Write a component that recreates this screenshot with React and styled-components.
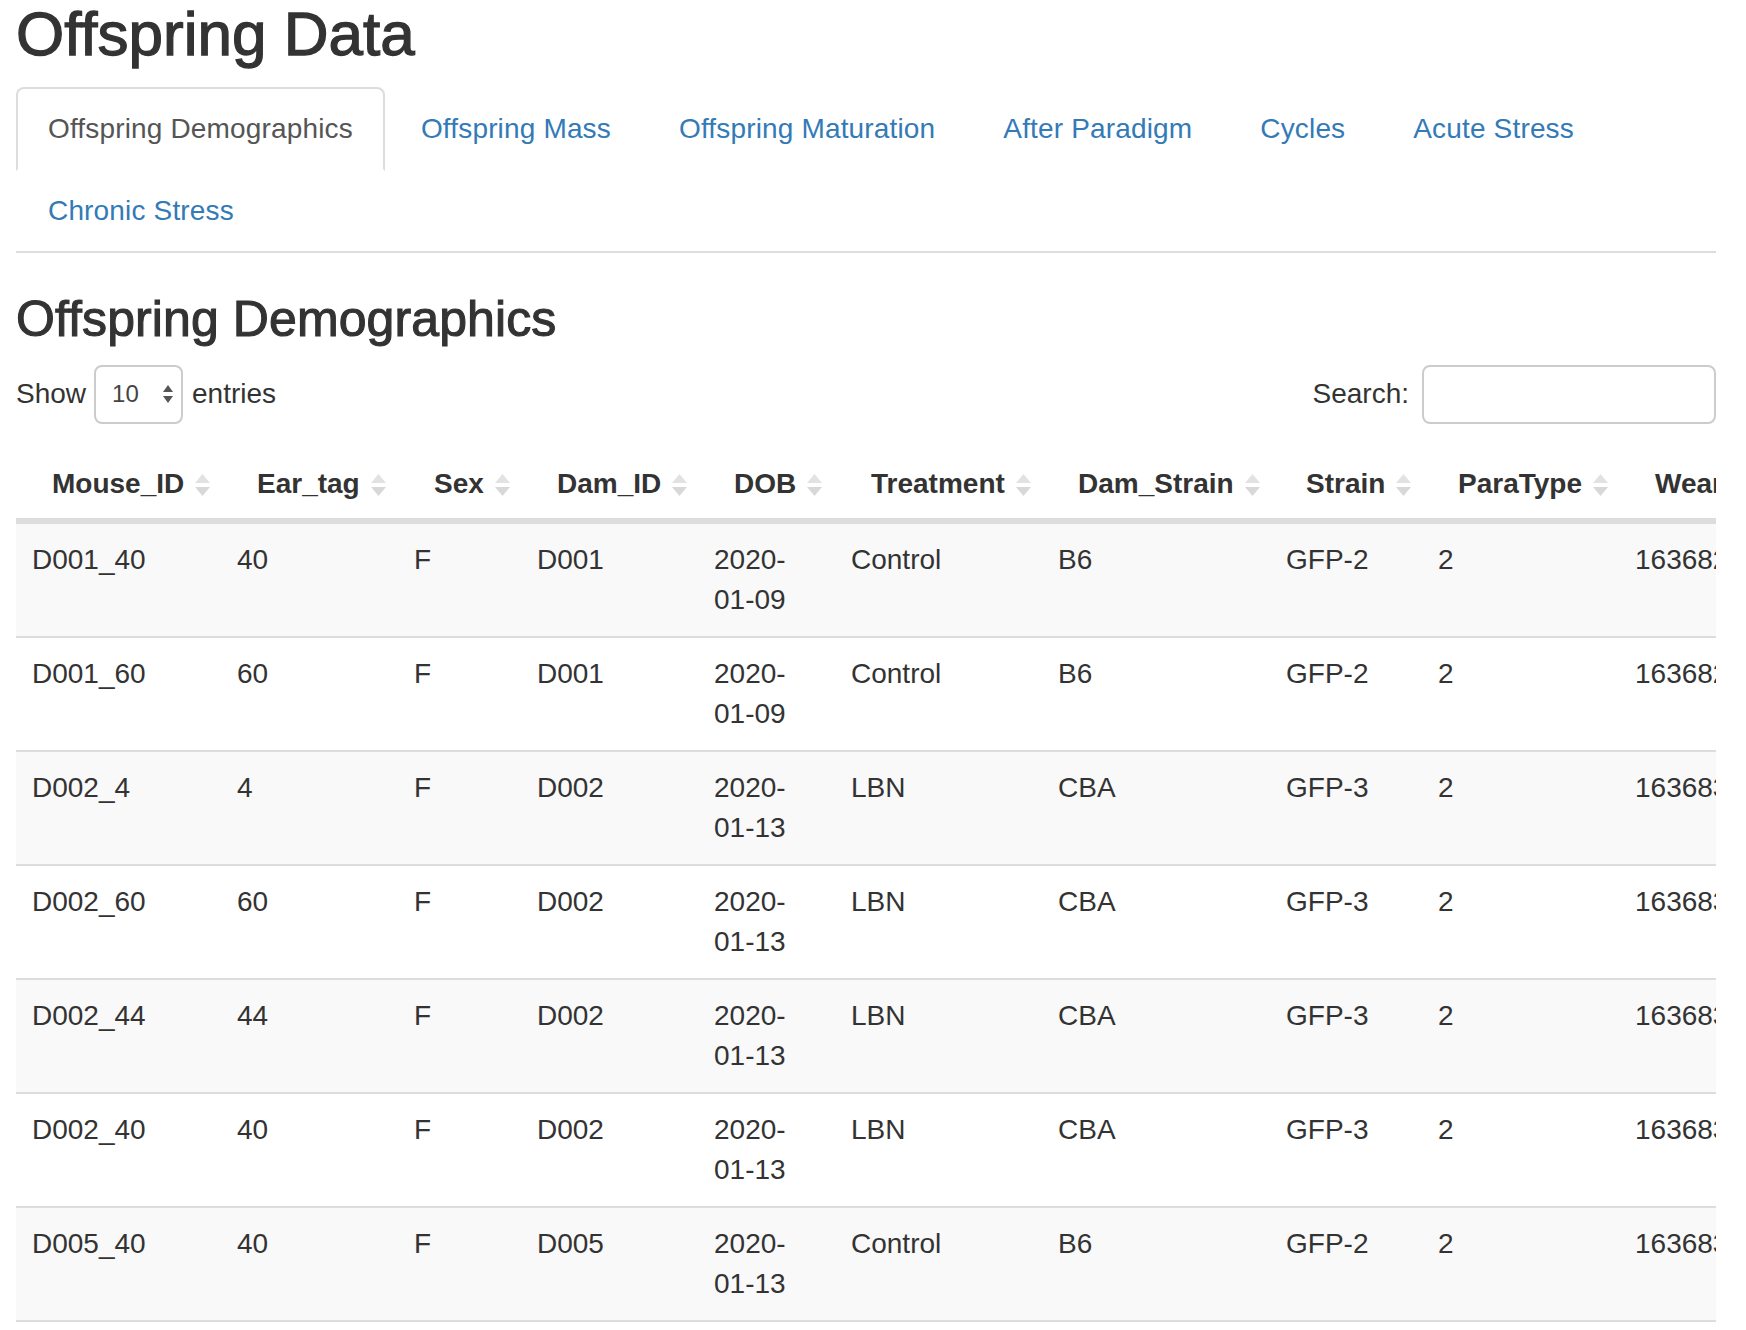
import React from 'react';
import styled, { createGlobalStyle } from 'styled-components';

const GlobalStyle = createGlobalStyle`
  html, body {
    margin: 0;
    padding: 0;
    background: #fff;
  }
  body {
    font-family: "Liberation Sans", Arial, Helvetica, sans-serif;
    color: #333;
  }
`;

const tabs = [
  'Offspring Demographics',
  'Offspring Mass',
  'Offspring Maturation',
  'After Paradigm',
  'Cycles',
  'Acute Stress',
  'Chronic Stress',
];

const columns = [
  { name: 'Mouse_ID', width: 205 },
  { name: 'Ear_tag', width: 177 },
  { name: 'Sex', width: 123 },
  { name: 'Dam_ID', width: 177 },
  { name: 'DOB', width: 137 },
  { name: 'Treatment', width: 207 },
  { name: 'Dam_Strain', width: 228 },
  { name: 'Strain', width: 152 },
  { name: 'ParaType', width: 197 },
  { name: 'Wean_Date', width: 260 },
];

const rows = [
  ['D001_40', '40', 'F', 'D001', '2020-01-09', 'Control', 'B6', 'GFP-2', '2', '1636826400'],
  ['D001_60', '60', 'F', 'D001', '2020-01-09', 'Control', 'B6', 'GFP-2', '2', '1636826400'],
  ['D002_4', '4', 'F', 'D002', '2020-01-13', 'LBN', 'CBA', 'GFP-3', '2', '1636830000'],
  ['D002_60', '60', 'F', 'D002', '2020-01-13', 'LBN', 'CBA', 'GFP-3', '2', '1636830000'],
  ['D002_44', '44', 'F', 'D002', '2020-01-13', 'LBN', 'CBA', 'GFP-3', '2', '1636830000'],
  ['D002_40', '40', 'F', 'D002', '2020-01-13', 'LBN', 'CBA', 'GFP-3', '2', '1636830000'],
  ['D005_40', '40', 'F', 'D005', '2020-01-13', 'Control', 'B6', 'GFP-2', '2', '1636830000'],
  ['D005_60', '60', 'F', 'D005', '2020-01-13', 'Control', 'B6', 'GFP-2', '2', '1636830000'],
  ['D006_4', '4', 'F', 'D006', '2020-01-14', 'LBN', 'CBA', 'GFP-3', '2', '1636833600'],
  ['D006_44', '44', 'F', 'D006', '2020-01-14', 'LBN', 'CBA', 'GFP-3', '2', '1636833600'],
];

const tableWidth = columns.reduce((sum, c) => sum + c.width, 0);

function SortIcon() {
  return (
    <SortSvg width="15" height="22" viewBox="0 0 15 22">
      <path d="M7.5 0 L15 9 L0 9 Z" fill="#e2e2e2" />
      <path d="M0 13 L15 13 L7.5 22 Z" fill="#d8d8d8" />
    </SortSvg>
  );
}

function App() {
  const [search, setSearch] = React.useState('');

  return (
    <Page>
      <GlobalStyle />
      <Title>Offspring Data</Title>

      <Tabs>
        {tabs.map((t, i) => (
          <Tab key={t} $active={i === 0}>{t}</Tab>
        ))}
      </Tabs>

      <SectionTitle>Offspring Demographics</SectionTitle>

      <Controls>
        <LengthBox>
          Show
          <FakeSelect>
            10
            <svg width="10" height="18" viewBox="0 0 10 18">
              <path d="M5 0 L10 7 L0 7 Z" fill="#555" />
              <path d="M0 11 L10 11 L5 18 Z" fill="#555" />
            </svg>
          </FakeSelect>
          entries
        </LengthBox>
        <SearchBox>
          Search:
          <SearchInput value={search} onChange={(e) => setSearch(e.target.value)} />
        </SearchBox>
      </Controls>

      <TableScroll>
        <Table>
          <colgroup>
            {columns.map((c) => (
              <col key={c.name} style={{ width: c.width }} />
            ))}
          </colgroup>
          <thead>
            <tr>
              {columns.map((c) => (
                <Th key={c.name}>
                  {c.name}
                  <SortIcon />
                </Th>
              ))}
            </tr>
          </thead>
          <tbody>
            {rows.map((r, i) => (
              <Tr key={r[0] + i} $striped={i % 2 === 0}>
                {r.map((v, j) => (
                  <Td key={j}>{j === 4 ? v.replace('-', '-\u200b') : v}</Td>
                ))}
              </Tr>
            ))}
          </tbody>
        </Table>
      </TableScroll>
    </Page>
  );
}

const Page = styled.div`
  padding: 0 30px 40px 16px;
`;

const Title = styled.h2`
  margin: 0 0 19px;
  font-size: 62px;
  line-height: 68px;
  font-weight: 400;
  color: #333;
  -webkit-text-stroke: 1.3px #333;
`;

const Tabs = styled.ul`
  display: flex;
  flex-wrap: wrap;
  margin: 0;
  padding: 0;
  list-style: none;
  border-bottom: 2px solid #ddd;
`;

const Tab = styled.li`
  margin: 0 4px -2px 0;
  padding: 20px 30px;
  font-size: 28px;
  line-height: 40px;
  letter-spacing: 0.16px;
  border: 2px solid ${(p) => (p.$active ? '#ddd' : 'transparent')};
  border-bottom-color: transparent;
  border-radius: 8px 8px 0 0;
  background: ${(p) => (p.$active ? '#fff' : 'transparent')};
  color: ${(p) => (p.$active ? '#555' : '#337ab7')};
  cursor: pointer;
`;

const SectionTitle = styled.h3`
  margin: 39px 0 17px;
  font-size: 50px;
  line-height: 55px;
  font-weight: 400;
  letter-spacing: 0.1px;
  color: #333;
  -webkit-text-stroke: 1.1px #333;
`;

const Controls = styled.div`
  display: flex;
  justify-content: space-between;
  align-items: center;
  height: 60px;
  font-size: 28px;
  color: #333;
`;

const LengthBox = styled.label`
  display: flex;
  align-items: center;
  gap: 8px;
`;

const FakeSelect = styled.div`
  display: flex;
  align-items: center;
  justify-content: space-between;
  box-sizing: border-box;
  width: 89px;
  height: 59px;
  margin-right: 1px;
  padding: 0 8px 0 16px;
  border: 2px solid #ccc;
  border-radius: 8px;
  font-size: 24px;
  color: #444;
`;

const SearchBox = styled.label`
  display: flex;
  align-items: center;
  gap: 13px;
`;

const SearchInput = styled.input`
  box-sizing: border-box;
  width: 294px;
  height: 59px;
  border: 2px solid #ccc;
  border-radius: 8px;
  font-size: 24px;
  padding: 0 12px;
  outline: none;
`;

const TableScroll = styled.div`
  overflow: hidden;
  margin-top: 26px;
`;

const Table = styled.table`
  width: ${tableWidth}px;
  table-layout: fixed;
  border-collapse: separate;
  border-spacing: 0;
  font-size: 28px;
  line-height: 40px;
  color: #333;
`;

const Th = styled.th`
  text-align: left;
  font-weight: 700;
  white-space: nowrap;
  padding: 14px 16px 14px 36px;
  border-bottom: 4px solid #ddd;
`;

const SortSvg = styled.svg`
  margin-left: 11px;
  vertical-align: -3px;
`;

const Tr = styled.tr`
  background: ${(p) => (p.$striped ? '#f9f9f9' : '#fff')};
`;

const Td = styled.td`
  padding: 16px;
  border-top: 2px solid #ddd;
  vertical-align: top;
  white-space: normal;
  overflow: hidden;
`;

export default App;
